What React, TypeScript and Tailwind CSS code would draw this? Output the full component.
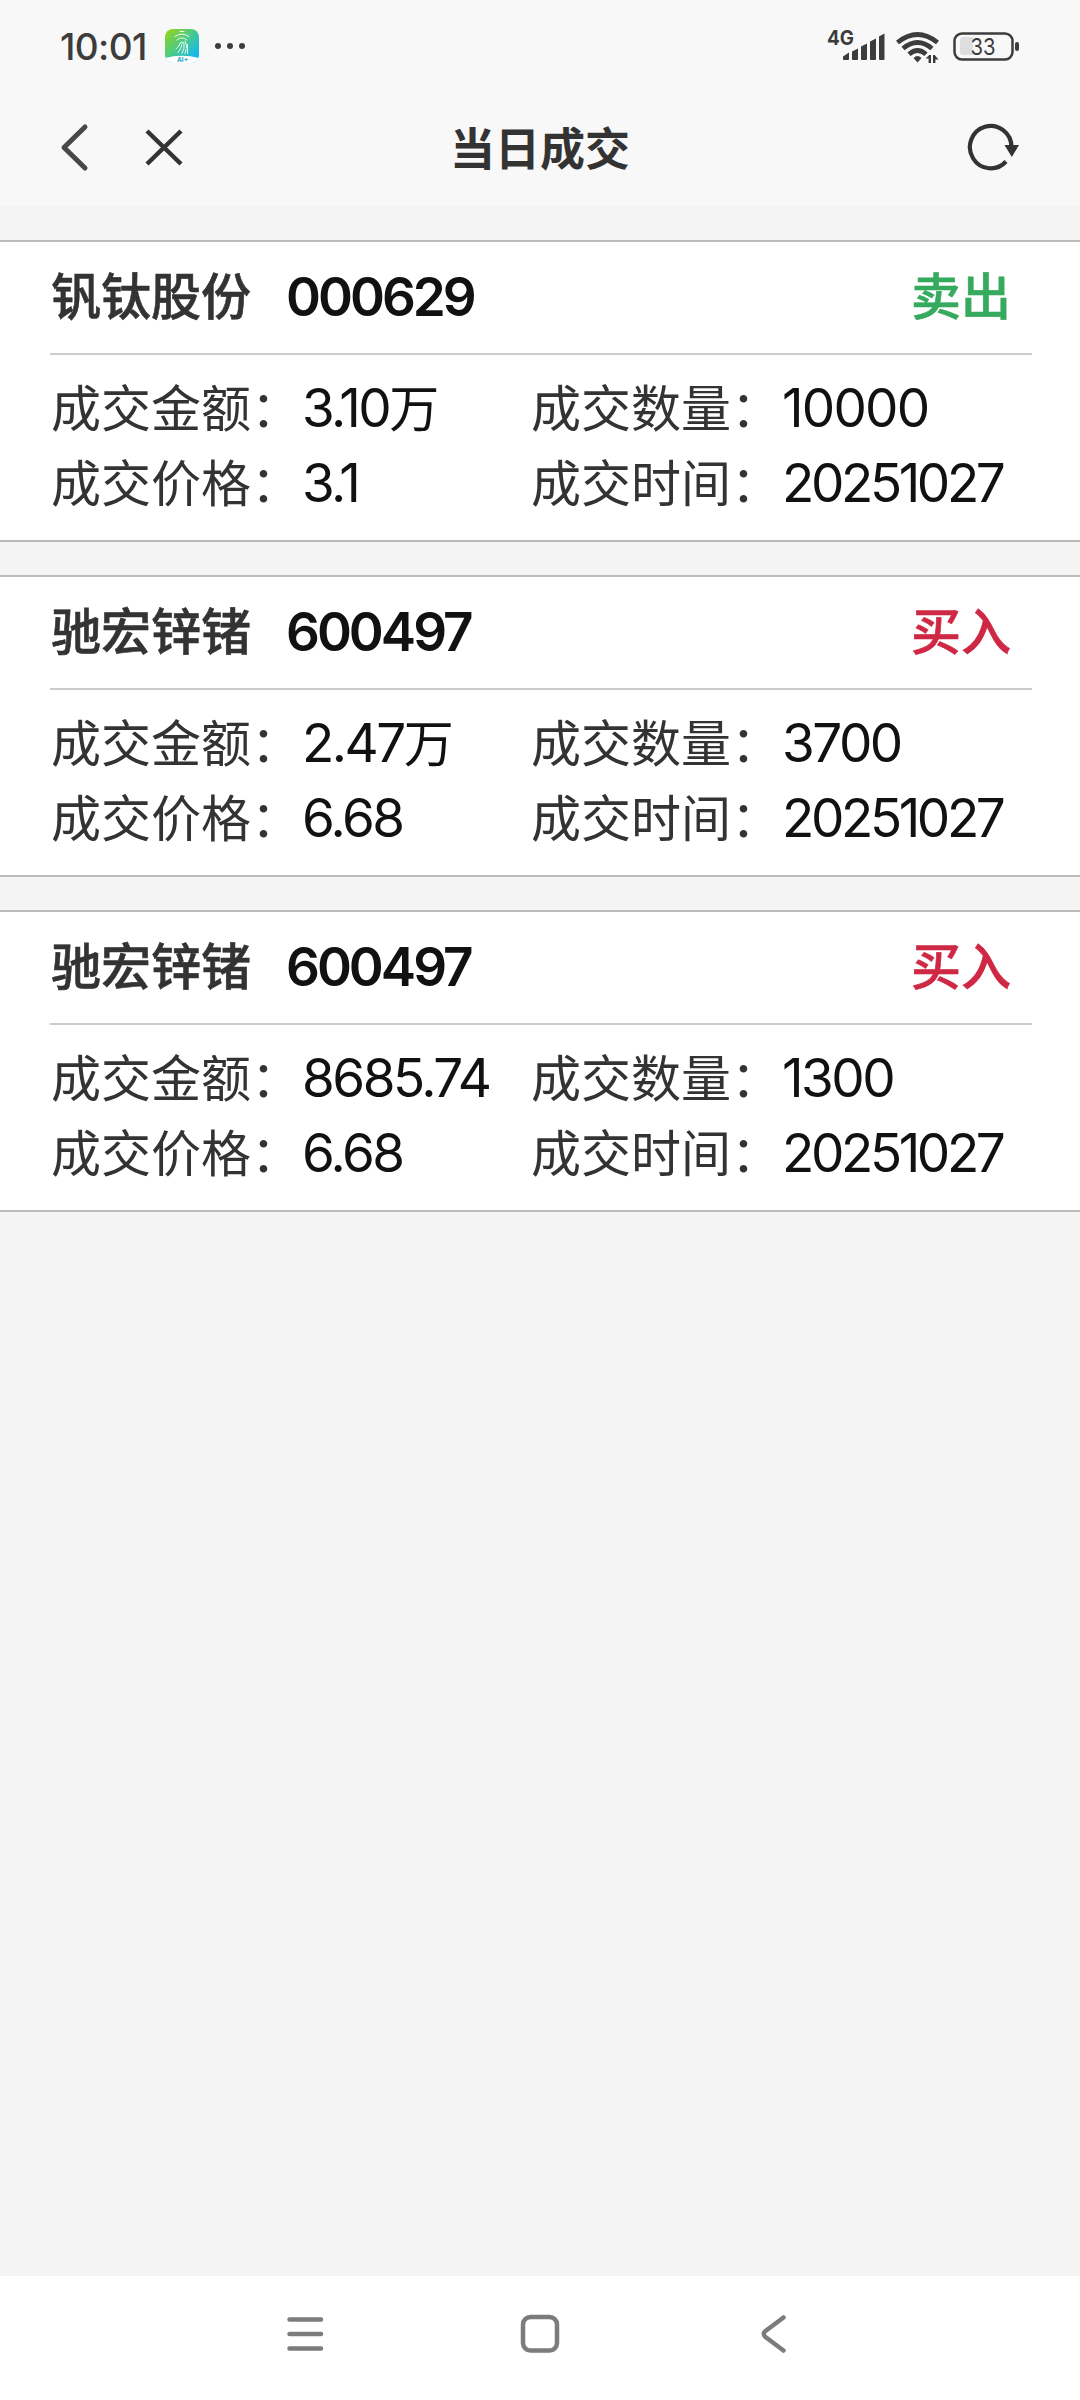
interface Trade {
  name: string;
  code: string;
  side: "buy" | "sell";
  amount: string;
  unit?: string;
  quantity: string;
  price: string;
  date: string;
}

const trades: Trade[] = [
  { name: "钒钛股份", code: "000629", side: "sell", amount: "3.10", unit: "万", quantity: "10000", price: "3.1", date: "20251027" },
  { name: "驰宏锌锗", code: "600497", side: "buy", amount: "2.47", unit: "万", quantity: "3700", price: "6.68", date: "20251027" },
  { name: "驰宏锌锗", code: "600497", side: "buy", amount: "8685.74", quantity: "1300", price: "6.68", date: "20251027" },
];

function StatusBar() {
  return (
    <div className="flex h-[92px] items-center justify-between pl-[60px] pr-[60px] text-[#3c3c3c]">
      <div className="flex items-center">
        <span className="w-[105px] whitespace-nowrap text-[37px] leading-none font-[450] tracking-[-0.6px]">10:01</span>
        <svg width="34" height="34" viewBox="0 0 34 34">
          <defs>
            <linearGradient id="app" x1="0" y1="0" x2="1" y2="1">
              <stop offset="0.1" stopColor="#8bd329" />
              <stop offset="0.5" stopColor="#43c994" />
              <stop offset="0.85" stopColor="#15b6ee" />
            </linearGradient>
            <clipPath id="appClip">
              <rect width="34" height="34" rx="8" />
            </clipPath>
          </defs>
          <g clipPath="url(#appClip)">
            <rect width="34" height="34" fill="url(#app)" />
            <path d="M0 29Q17 24.500 34 29V34H0Z" fill="#fff" />
          </g>
          <g fill="none" stroke="#fff" strokeWidth="0.9" strokeLinecap="round">
            <path d="M15 2.500h4M10 7.500q7-5 14 0M12 11q5-4.500 10 0M11 20q4-3 4-6 2-2 4 0 1 6-2 10.500M13 23.500q4-4 4-8.500M20 12q2 4 1.500 7M22.500 15.500v9M20 24.500l1-4" />
          </g>
          <text x="17.500" y="32.800" textAnchor="middle" fontSize="6.500" fontWeight="700" fill="#1ba5c4">AI+</text>
        </svg>
        <div className="ml-4 flex gap-1.5">
          <i className="size-1.5 rounded-full bg-[#3c3c3c]" />
          <i className="size-1.5 rounded-full bg-[#3c3c3c]" />
          <i className="size-1.5 rounded-full bg-[#3c3c3c]" />
        </div>
      </div>

      {/* signal, wifi, battery */}
      <svg width="194" height="40" viewBox="826 25 194 40" fill="#3c3c3c">
        <text x="827" y="44" fontSize="20" fontWeight="700" textLength="27" lengthAdjust="spacingAndGlyphs">4G</text>
        <path d="M843 55.500l6-4v6.500q0 1-1 1h-4q-1 0-1-1zM852 50.500l6-3v10.500q0 1-1 1h-4q-1 0-1-1zM861 45.500l6-3v15.500q0 1-1 1h-4q-1 0-1-1zM870 40.500l6-3v20.500q0 1-1 1h-4q-1 0-1-1zM879 35.500l5.500-3v25.500q0 1-1 1h-3.500q-1 0-1-1z" />
        <g fill="none" stroke="#3c3c3c" strokeWidth="4.800">
          <path d="M897.500 41.500q20-16 40 0M903 47.500q14.500-12 29 0M909 53.200q8.500-7.500 17 0" />
        </g>
        <path d="M913.500 57q4-4 8 0l-4 4.500z" />
        <path d="M925.500 57.500l3.800-3.500h1.700v8h-2.400v-4.500zM933 54h1.700l3.800 4.500h-3.100v3.500h-2.400z" />
        <rect x="954.500" y="32.500" width="58" height="26" rx="7.500" fill="none" stroke="#3c3c3c" strokeWidth="2.500" />
        <path d="M960 39q0-3 3-3h10v18h-10q-3 0-3-3z" fill="#dedede" />
        <text x="983" y="54" textAnchor="middle" fontSize="23.500" textLength="25" lengthAdjust="spacingAndGlyphs">33</text>
        <rect x="1015" y="41" width="4" height="9" rx="2" />
      </svg>
    </div>
  );
}

function NavBar() {
  return (
    <div className="flex h-[114px] items-start justify-between pl-[60px] pr-[60px]">
      <div className="flex w-[124px]">
        <svg width="30" height="50" viewBox="60 122 30 50" fill="none" stroke="#484848" strokeWidth="5" strokeLinecap="round" strokeLinejoin="round" className="mt-[30px]">
          <path d="M85 127L64 147.500 85 168" />
        </svg>
        <svg width="40" height="40" viewBox="144 127 40 40" fill="none" stroke="#333" strokeWidth="4.500" className="mt-[35px] ml-[54px]">
          <path d="M147 131L181 164M181 131L147 164" />
        </svg>
      </div>
      <h1 className="mt-[28px] text-[45px] leading-[60px] font-bold text-[#333]">当日成交</h1>
      <div className="flex w-[124px] justify-end">
        <svg width="54" height="50" viewBox="966 122 54 50" fill="none" stroke="#333" strokeWidth="4.200" className="mt-[30px]">
          <path d="M1006 161.500A20.800 21.200 0 1 1 1011.500 147" />
          <path d="M1004.500 145h14.500l-7.200 12z" fill="#333" stroke="none" />
        </svg>
      </div>
    </div>
  );
}

function Field({ label, value, unit }: { label: string; value: string; unit?: string }) {
  let tracking = "tracking-[-1.8px]";
  if (value.length > 7) tracking = "tracking-[-3.4px]";
  else if (value.length !== 5) tracking = "tracking-[-2.5px]";

  return (
    <div className="flex h-[75px] w-[480px] items-baseline whitespace-nowrap">
      <span className="text-[#333]">{label}：</span>
      <span className={`ml-px text-[53px] text-[#111] ${tracking}`}>{value}</span>
      {unit && <span className="text-[#111]">{unit}</span>}
    </div>
  );
}

function TradeCard({ trade }: { trade: Trade }) {
  return (
    <div className="h-[302px] border-y-2 border-[#bbb] bg-white">
      <div className="mr-[48px] ml-[50px] flex h-[113px] items-center border-b-2 border-[#ccc] pb-[2px] text-[50px] leading-[76px] font-medium">
        <span className="ml-px text-[#333] [-webkit-text-stroke:0.6px]">{trade.name}</span>
        <span className="ml-[35px] flex-1 text-[53px] font-semibold tracking-[-3px] text-[#111]">{trade.code}</span>
        <span className={`mr-[21px] [-webkit-text-stroke:0.6px] ${trade.side === "sell" ? "text-[#36aa5e]" : "text-[#cf2844]"}`}>
          {trade.side === "sell" ? "卖出" : "买入"}
        </span>
      </div>
      <div className="mt-[16px] ml-[51px] flex flex-wrap text-[50px] leading-[75px]">
        <Field label="成交金额" value={trade.amount} unit={trade.unit} />
        <Field label="成交数量" value={trade.quantity} />
        <Field label="成交价格" value={trade.price} />
        <Field label="成交时间" value={trade.date} />
      </div>
    </div>
  );
}

export default function App() {
  return (
    <div className="flex h-[2400px] w-[1080px] flex-col bg-[#f4f4f4] font-['Inter','Noto_Sans_CJK_SC',sans-serif]">
      <header className="h-[206px] bg-[#f8f8f8]">
        <StatusBar />
        <NavBar />
      </header>

      <main className="flex flex-1 flex-col gap-[33px] pt-[34px]">
        {trades.map((trade, i) => (
          <TradeCard key={i} trade={trade} />
        ))}
      </main>

      {/* system navigation */}
      <footer className="flex h-[124px] items-start bg-white pt-[36px] pl-[285px]">
        <svg width="510" height="50" viewBox="285 2312 510 50" fill="none" stroke="#7c7c7c" strokeWidth="4.500" strokeLinecap="round">
          <path d="M289.500 2319.500h31.500M289.500 2334h31.500M289.500 2348.500h31.500" />
          <rect x="523" y="2317" width="34" height="33.500" rx="7.500" />
          <path d="M783.500 2317.500L765.500 2331q-3.500 3 0 6L783.500 2350.500" />
        </svg>
      </footer>
    </div>
  );
}
